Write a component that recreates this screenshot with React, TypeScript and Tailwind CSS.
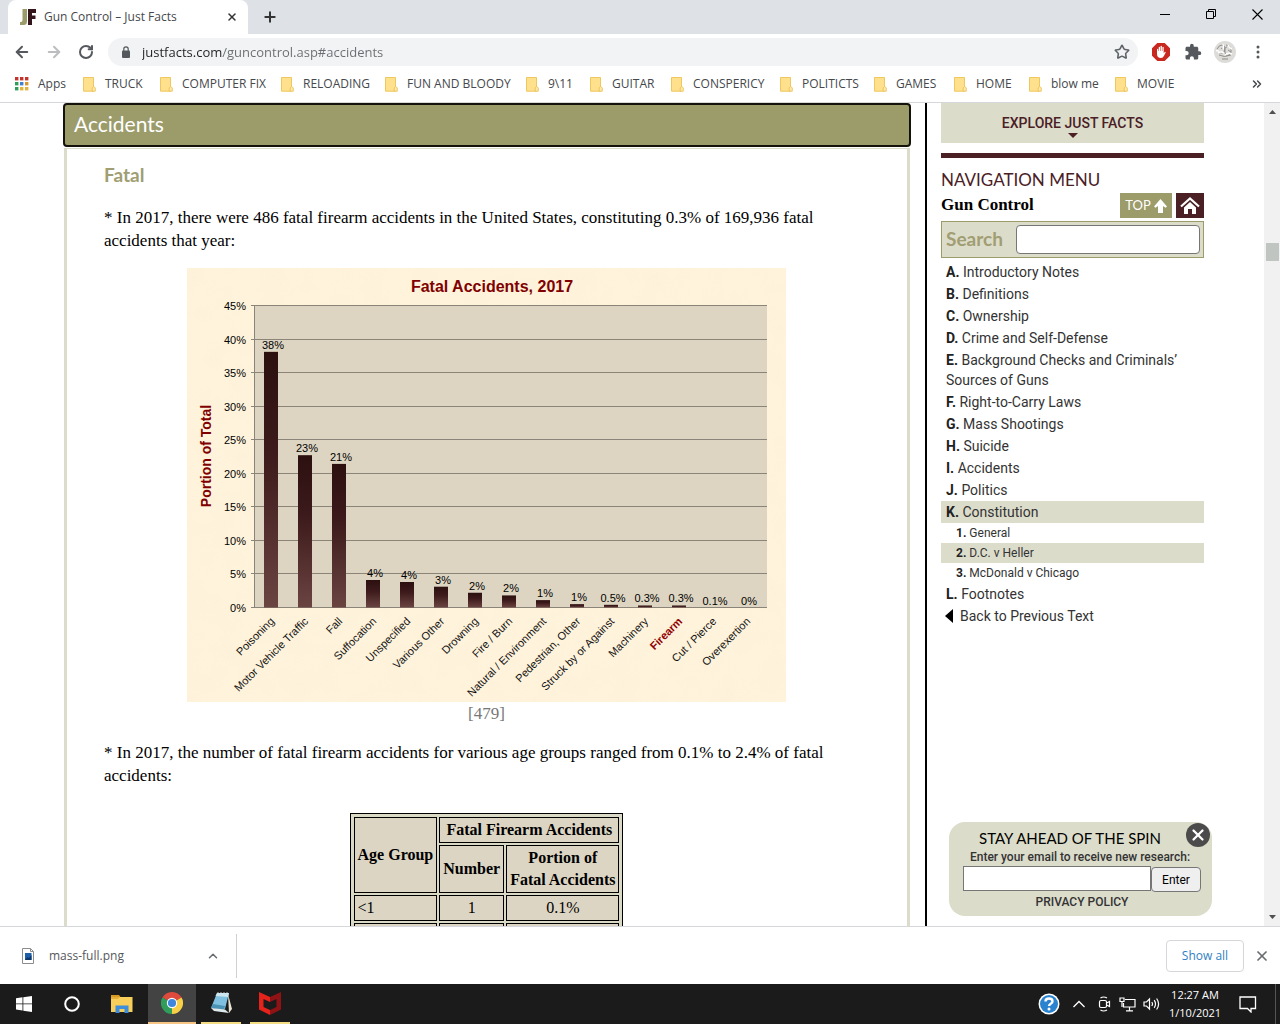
import {
  ArrowLeft,
  ArrowRight,
  ChevronUp,
  ChevronsRight,
  Plus,
  RotateCw,
  Star,
  X,
} from "lucide-react";
import { MdExtension } from "react-icons/md";

interface Bookmark {
  label: string;
  width: string;
}

interface NavItem {
  key: string;
  label: string;
  sub?: boolean;
  active?: boolean;
}

interface Cause {
  label: string;
  value: number;
  text: string;
}

const bookmarks: Bookmark[] = [
  { label: "TRUCK", width: "w-[77px]" },
  { label: "COMPUTER FIX", width: "w-[121px]" },
  { label: "RELOADING", width: "w-[104px]" },
  { label: "FUN AND BLOODY", width: "w-[141px]" },
  { label: "9\\11", width: "w-16" },
  { label: "GUITAR", width: "w-[81px]" },
  { label: "CONSPERICY", width: "w-[109px]" },
  { label: "POLITICTS", width: "w-[94px]" },
  { label: "GAMES", width: "w-20" },
  { label: "HOME", width: "w-[75px]" },
  { label: "blow me", width: "w-[86px]" },
  { label: "MOVIE", width: "w-20" },
];

const navItems: NavItem[] = [
  { key: "A.", label: "Introductory Notes" },
  { key: "B.", label: "Definitions" },
  { key: "C.", label: "Ownership" },
  { key: "D.", label: "Crime and Self-Defense" },
  { key: "E.", label: "Background Checks and Criminals’ Sources of Guns" },
  { key: "F.", label: "Right-to-Carry Laws" },
  { key: "G.", label: "Mass Shootings" },
  { key: "H.", label: "Suicide" },
  { key: "I.", label: "Accidents" },
  { key: "J.", label: "Politics" },
  { key: "K.", label: "Constitution", active: true },
  { key: "1.", label: "General", sub: true },
  { key: "2.", label: "D.C. v Heller", sub: true, active: true },
  { key: "3.", label: "McDonald v Chicago", sub: true },
  { key: "L.", label: "Footnotes" },
];

const causes: Cause[] = [
  { label: "Poisoning", value: 38.1, text: "38%" },
  { label: "Motor Vehicle Traffic", value: 22.7, text: "23%" },
  { label: "Fall", value: 21.4, text: "21%" },
  { label: "Suffocation", value: 4.1, text: "4%" },
  { label: "Unspecified", value: 3.8, text: "4%" },
  { label: "Various Other", value: 3.1, text: "3%" },
  { label: "Drowning", value: 2.2, text: "2%" },
  { label: "Fire / Burn", value: 1.8, text: "2%" },
  { label: "Natural / Environment", value: 1.1, text: "1%" },
  { label: "Pedestrian, Other", value: 0.5, text: "1%" },
  { label: "Struck by or Against", value: 0.4, text: "0.5%" },
  { label: "Machinery", value: 0.3, text: "0.3%" },
  { label: "Firearm", value: 0.3, text: "0.3%" },
  { label: "Cut / Pierce", value: 0, text: "0.1%" },
  { label: "Overexertion", value: 0, text: "0%" },
];

const ticks = [45, 40, 35, 30, 25, 20, 15, 10, 5, 0];

// chart plot area
const PLOT_LEFT = 67;
const PLOT_RIGHT = 580;
const PLOT_BOTTOM = 339.5;
const PER_PERCENT = 6.71;
const BAR_STEP = 34;

function FolderIcon() {
  return (
    <svg width="13" height="15" viewBox="0 0 13 15" className="shrink-0">
      <path d="M.5.5h10v13.7H.5z" fill="#ffe08c" stroke="#eec75e" />
      <path d="M10.5 9.5l1.8 1.3v3.4H9.2v-3.2z" fill="#ffe9ab" stroke="#e9bf50" strokeWidth=".8" />
    </svg>
  );
}

function AppsIcon() {
  const colors = ["#c5342c", "#c5342c", "#c5342c", "#2f9e5b", "#3f7fd6", "#d9962f", "#2f9e5b", "#e0b440", "#e0b440"];
  return (
    <svg width="14" height="14" viewBox="0 0 14 14">
      {colors.map((c, i) => (
        <rect key={i} x={(i % 3) * 5} y={Math.floor(i / 3) * 5} width="3.4" height="3.4" fill={c} />
      ))}
    </svg>
  );
}

function TabStrip() {
  return (
    <div className="flex h-[34px] shrink-0 bg-[#dee1e6]">
      <div className="ml-2 flex w-[240px] items-center rounded-t-lg bg-white pl-3 pr-2">
        <svg width="16" height="16" viewBox="0 0 16 16" className="shrink-0">
          <path d="M2 0h5v12.5Q7 16 3.5 16H0v-3h1q1.500 0 1.500-2V0z" fill="#9c9b6a" />
          <path d="M8 0h8v4h-4v2.500h3.500v3.500H12v6H8z" fill="#35151c" />
        </svg>
        <span className="ml-2 flex-1 whitespace-nowrap text-xs text-[#45484c]">Gun Control – Just Facts</span>
        <button aria-label="Close tab" className="flex h-4 w-4 items-center justify-center">
          <X className="h-3 w-3 text-[#333]" strokeWidth={3} />
        </button>
      </div>
      <button aria-label="New tab" className="flex w-11 items-center justify-center">
        <Plus className="h-4 w-4 text-[#333]" strokeWidth={3} />
      </button>
      <div className="ml-auto flex">
        <button aria-label="Minimize" className="flex w-[46px] items-center justify-center pb-1.5">
          <svg width="10" height="10" viewBox="0 0 10 10"><path d="M0 5.500h10" stroke="#000" /></svg>
        </button>
        <button aria-label="Restore" className="flex w-[46px] items-center justify-center pb-1.5">
          <svg width="10" height="10" viewBox="0 0 10 10" fill="none" stroke="#000">
            <path d="M.5 2.500h7v7h-7zM2.500 2.500v-2h7v7h-2" />
          </svg>
        </button>
        <button aria-label="Close" className="flex w-[46px] items-center justify-center pb-1.5">
          <svg width="11" height="11" viewBox="0 0 11 11"><path d="M.5.5l10 10M10.500.5l-10 10" stroke="#000" strokeWidth="1.1" /></svg>
        </button>
      </div>
    </div>
  );
}

function Toolbar() {
  return (
    <div className="flex h-9 shrink-0 items-center bg-white pr-3">
      <button aria-label="Back" className="ml-3 flex w-5 justify-center">
        <ArrowLeft className="h-[18px] w-[18px] text-[#55585c]" strokeWidth={2.6} />
      </button>
      <button aria-label="Forward" className="ml-3 flex w-5 justify-center">
        <ArrowRight className="h-[18px] w-[18px] text-[#bbbdbf]" strokeWidth={2.6} />
      </button>
      <button aria-label="Reload" className="ml-3 flex w-5 justify-center">
        <RotateCw className="h-4 w-4 text-[#55585c]" strokeWidth={3} />
      </button>
      <div className="ml-3 flex h-7 flex-1 items-center rounded-full bg-[#f1f3f4] pl-3.5 pr-2">
        <svg width="8" height="12" viewBox="0 0 8 12">
          <rect y="4.500" width="8" height="7.500" rx="1" fill="#55585c" />
          <path d="M1.800 5V3a2.200 2.200 0 0 1 4.400 0v2" fill="none" stroke="#55585c" strokeWidth="1.200" />
        </svg>
        {/* host is drawn darker than the path */}
        <input
          aria-label="Address"
          defaultValue="justfacts.com/guncontrol.asp#accidents"
          className="ml-3 min-w-0 flex-1 bg-[linear-gradient(90deg,#202124_80px,#6a6d70_80px)] bg-clip-text text-[13px] leading-7 text-transparent outline-none"
        />
        <button aria-label="Bookmark this page">
          <Star className="h-4 w-4 text-[#5f6368]" strokeWidth={2.4} />
        </button>
      </div>
      <button aria-label="Ad blocker" className="ml-3.5">
        <svg width="18" height="18" viewBox="0 0 18 18">
          <path d="M5.300 0h7.400L18 5.300v7.400L12.700 18H5.300L0 12.700V5.300z" fill="#c8281f" />
          <path d="M5 9V6.200q.6-.8 1.200 0V8h.5V4.200q.7-.9 1.300 0V8h.5V3.300q.8-.9 1.400 0V8h.5V4.200q.7-.9 1.300 0v6l1-1.200q.9-.4 1 .4l-1.800 3.600Q11 15 9 15q-4 0-4-4z" fill="#fff" />
        </svg>
      </button>
      <button aria-label="Extensions" className="ml-3.5">
        <MdExtension className="h-[18px] w-[18px] text-[#55585c]" />
      </button>
      <button aria-label="Profile" className="ml-3">
        <svg width="22" height="22" viewBox="0 0 22 22">
          <circle cx="11" cy="11" r="11" fill="#dddcd9" />
          <path d="M3 8q2-4 5-4t3 4-3 4-4-1M12 4q4 0 5 4t-2 6-4-3 2-5M5 14q5 3 12 0M8 18h6M14 9l3 2M7 7l3 2" fill="none" stroke="#8f8d89" />
          <path d="M4 12q3-2 6 0M11 14q3-3 7-1M9 3q1 3 0 6M2 10q2-1 3 1M14 4q1 3 4 4" fill="none" stroke="#fff" strokeWidth="1.400" />
        </svg>
      </button>
      <button aria-label="Menu" className="ml-3 flex w-5 justify-center">
        <svg width="4" height="14" viewBox="0 0 4 14" fill="#55585c">
          <circle cx="2" cy="2" r="1.500" />
          <circle cx="2" cy="7" r="1.500" />
          <circle cx="2" cy="12" r="1.500" />
        </svg>
      </button>
    </div>
  );
}

function BookmarksBar() {
  return (
    <nav className="flex h-[33px] shrink-0 items-center overflow-hidden border-b border-[#d5d7da] bg-white pb-1 pl-[15px] pr-4 text-xs text-[#45484c]">
      <a href="#apps" className="flex w-[68px] shrink-0 items-center gap-[9px]">
        <AppsIcon />
        Apps
      </a>
      {bookmarks.map((b) => (
        <a key={b.label} href="#bookmark" className={`flex shrink-0 items-center gap-[9px] whitespace-nowrap ${b.width}`}>
          <FolderIcon />
          {b.label}
        </a>
      ))}
      <button aria-label="More bookmarks" className="ml-auto">
        <ChevronsRight className="h-3.5 w-3.5 text-[#45484c]" strokeWidth={2.6} />
      </button>
    </nav>
  );
}

function AccidentsChart() {
  return (
    <svg
      width="599"
      height="434"
      viewBox="0 0 599 434"
      role="img"
      aria-label="Fatal Accidents, 2017"
      className="font-['Liberation_Sans',sans-serif]"
    >
      <defs>
        <linearGradient id="bar" x1="0" y1="0" x2="0" y2="1">
          <stop offset="0" stopColor="#2c1010" />
          <stop offset="0.4" stopColor="#3d1a1b" />
          <stop offset="1" stopColor="#6a4441" />
        </linearGradient>
        <filter id="paper" x="0" y="0" width="100%" height="100%">
          <feTurbulence type="fractalNoise" baseFrequency="0.04" numOctaves="2" seed="4" />
          <feColorMatrix values="0 0 0 0 0.96  0 0 0 0 0.86  0 0 0 0 0.68  2 0 0 0 -0.75" />
        </filter>
      </defs>
      <rect width="599" height="434" fill="#fff3dc" />
      <rect width="599" height="434" filter="url(#paper)" opacity="0.4" />
      <rect x={PLOT_LEFT} y="37.5" width={PLOT_RIGHT - PLOT_LEFT} height="302" fill="#ddd5c2" />
      {ticks.map((t) => {
        const y = Math.floor(PLOT_BOTTOM - t * PER_PERCENT) + 0.5;
        return (
          <g key={t}>
            <path d={`M${PLOT_LEFT - 3} ${y}H${PLOT_RIGHT}`} stroke="#8b8478" />
            <text x="59" y={y + 4} fontSize="11" textAnchor="end">{t}%</text>
          </g>
        );
      })}
      <path d={`M${PLOT_LEFT + 0.5} 37V340`} stroke="#8b8478" />
      {causes.map((c, i) => {
        const cx = PLOT_LEFT + 17 + i * BAR_STEP;
        const top = PLOT_BOTTOM - c.value * PER_PERCENT;
        const firearm = c.label === "Firearm";
        return (
          <g key={c.label} fontSize="11">
            <rect x={cx - 7} y={top} width="14" height={PLOT_BOTTOM - top} fill="url(#bar)" />
            <text x={cx + 2} y={top - 3} textAnchor="middle">{c.text}</text>
            <text
              transform={`translate(${cx + 4} 354) rotate(-45)`}
              textAnchor="end"
              fill={firearm ? "#900000" : "#111"}
              fontWeight={firearm ? 700 : 400}
            >
              {c.label}
            </text>
          </g>
        );
      })}
      <text x="305" y="24" fontSize="16" fontWeight="700" fill="#800000" textAnchor="middle">
        Fatal Accidents, 2017
      </text>
      <text transform="translate(24 188) rotate(-90)" fontSize="14" fontWeight="700" fill="#800000" textAnchor="middle">
        Portion of Total
      </text>
    </svg>
  );
}

function AgeTable() {
  const cell = "border border-black bg-[#ddd5c3] px-[3px] py-px";
  return (
    <table className="mx-auto mt-[26px] border-separate border-spacing-[2px] border border-black bg-[#d9d9c5] p-px text-base leading-[22px]">
      <thead>
        <tr>
          <th rowSpan={2} className={cell}>Age Group</th>
          <th colSpan={2} className={cell}>Fatal Firearm Accidents</th>
        </tr>
        <tr>
          <th className={cell}>Number</th>
          <th className={cell}>Portion of<br />Fatal Accidents</th>
        </tr>
      </thead>
      <tbody>
        <tr>
          <td className={cell}>&lt;1</td>
          <td className={`text-center ${cell}`}>1</td>
          <td className={`text-center ${cell}`}>0.1%</td>
        </tr>
        <tr className="h-7">
          <td className={cell}></td>
          <td className={cell}></td>
          <td className={cell}></td>
        </tr>
      </tbody>
    </table>
  );
}

function Article() {
  return (
    <main className="min-w-0 flex-1 pl-[63px] pr-3.5">
      <h1 className="h-11 rounded border-2 border-[#14120a] bg-[#9c9b6a] pl-[9px] font-['Lato',sans-serif] text-[21px] leading-[38px] text-white">
        Accidents
      </h1>
      <div className="mx-px mt-px border-x-[3px] border-t border-[#dcdccb] pl-[37px] pr-[38px] pt-3 font-['Liberation_Serif',serif] text-[17px] leading-[23px] text-black">
        <h2 className="font-['Lato',sans-serif] text-[19px] font-bold leading-7 text-[#a09e72]">Fatal</h2>
        <p className="mt-[17px] pr-10">
          * In 2017, there were 486 fatal firearm accidents in the United States, constituting 0.3% of 169,936 fatal
          accidents that year:
        </p>
        <div className="mt-4 flex flex-col items-center">
          <AccidentsChart />
          <a href="#footnote" className="text-[#777]">[479]</a>
        </div>
        <p className="mt-4 pr-10">
          * In 2017, the number of fatal firearm accidents for various age groups ranged from 0.1% to 2.4% of fatal
          accidents:
        </p>
        <AgeTable />
      </div>
    </main>
  );
}

function Sidebar() {
  return (
    <aside className="w-[339px] shrink-0 border-l-2 border-black pl-3.5 pr-[60px] font-['Roboto',sans-serif] text-[#333]">
      <button className="flex h-10 w-full flex-col items-center bg-[#dcdccb] pt-2.5 text-sm font-medium leading-5 text-[#4a2025]">
        EXPLORE JUST FACTS
        <svg width="10" height="5" viewBox="0 0 10 5"><path d="M0 0h10L5 5z" fill="#4a2025" /></svg>
      </button>
      <div className="mt-2.5 h-[5px] bg-[#4a2025]"></div>
      <h2 className="mt-2.5 font-['Lato',sans-serif] text-[17px] leading-6 text-[#4a2025]">NAVIGATION MENU</h2>
      <div className="flex h-[26px] items-center">
        <strong className="flex-1 font-['Liberation_Serif',serif] text-[17px] leading-6 text-black">Gun Control</strong>
        <a href="#top" className="mt-px flex h-[25px] w-[52px] items-center justify-center gap-[3px] bg-[#9c9b6a] font-['Lato',sans-serif] text-[13px] text-white">
          TOP
          <svg width="13" height="14" viewBox="0 0 13 14"><path d="M6.500 0l6.500 7.500-1.500 1.200L9 7v7H4V7L1.500 8.700 0 7.500z" fill="#fff" /></svg>
        </a>
        <a href="#home" aria-label="Home" className="ml-1 mt-px flex h-[25px] w-7 items-center justify-center bg-[#4a2025]">
          <svg width="20" height="18" viewBox="0 0 20 18">
            <path d="M1 9.500L10 1.500l9 8" fill="none" stroke="#fff" strokeWidth="2.200" />
            <path d="M10 5l6 5.400V17h-4v-5H8v5H4v-6.600z" fill="#fff" />
          </svg>
        </a>
      </div>
      <div className="mt-[3px] flex h-[37px] items-center border border-[#9c9b6a] bg-[#dcdccb] pl-1 pr-[3px]">
        <label htmlFor="search" className="w-[70px] font-['Lato',sans-serif] text-[19px] font-bold text-[#a09e72]">Search</label>
        <input id="search" className="h-[29px] min-w-0 flex-1 rounded-sm border border-[#767676] bg-white px-1" />
      </div>
      <ul className="mt-[3px]">
        {navItems.map((item) => (
          <li
            key={item.key}
            className={`${item.sub ? "pl-[15px] text-xs leading-5" : "py-px pl-[5px] text-sm leading-5"} ${
              item.active ? "bg-[#dcdccb]" : ""
            }`}
          >
            <a href="#section">
              <b className="font-bold text-[#222]">{item.key}</b> {item.label}
            </a>
          </li>
        ))}
      </ul>
      <a href="#back" className="flex items-center gap-[7px] pl-1 text-sm leading-[22px]">
        <svg width="8" height="14" viewBox="0 0 8 14"><path d="M8 0v14L0 7z" fill="#000" /></svg>
        Back to Previous Text
      </a>
    </aside>
  );
}

function Newsletter() {
  return (
    <form className="absolute bottom-2.5 right-[68px] w-[263px] rounded-2xl bg-[#dcdccb] pb-1 pl-3.5 pr-[11px] pt-1.5 text-center font-['Roboto',sans-serif] text-xs font-medium text-[#333]">
      <button type="button" aria-label="Dismiss" className="absolute right-0.5 top-px flex h-6 w-6 items-center justify-center rounded-full bg-[#4b4b4b]">
        <X className="h-[18px] w-[18px] text-white" strokeWidth={3} />
      </button>
      <h3 className="pr-6 font-['Lato',sans-serif] text-[15px] font-normal leading-5 text-black">STAY AHEAD OF THE SPIN</h3>
      <label htmlFor="email" className="block pr-1 leading-[18px]">Enter your email to receive new research:</label>
      <div className="flex items-start">
        <input id="email" type="email" className="h-[25px] min-w-0 flex-1 border border-[#767676] bg-white px-1" />
        <button type="button" className="mt-px h-[25px] w-[50px] rounded-sm border border-[#767676] bg-[#efefef] font-normal text-black">
          Enter
        </button>
      </div>
      <a href="#privacy" className="block leading-5">PRIVACY POLICY</a>
    </form>
  );
}

function Scrollbar() {
  return (
    <div className="flex w-4 shrink-0 flex-col items-center bg-[#f1f1f1] py-[7px]">
      <svg width="7" height="4" viewBox="0 0 7 4"><path d="M0 4h7L3.500 0z" fill="#505050" /></svg>
      <div className="mt-[129px] h-[18px] w-[13px] bg-[#c1c5c1]"></div>
      <svg width="7" height="4" viewBox="0 0 7 4" className="mt-auto"><path d="M0 0h7L3.500 4z" fill="#505050" /></svg>
    </div>
  );
}

function DownloadBar() {
  return (
    <div className="flex h-[58px] shrink-0 items-center border-t border-[#d5d7da] bg-white pl-[22px] pr-2.5 text-[#55585c]">
      <svg width="12" height="16" viewBox="0 0 12 16">
        <path d="M.5.5h8l3 3v12H.5z" fill="#fff" stroke="#8a8d90" />
        <path d="M8.500.5v3h3" fill="none" stroke="#8a8d90" />
        <path d="M3 5h6.500v7H3z" fill="#1d5fa8" />
        <path d="M3 12l2.500-3 1.500 1.200L9.500 7v5z" fill="#0b3768" />
      </svg>
      <span className="ml-[15px] w-[157px] text-xs">mass-full.png</span>
      <button aria-label="Download options">
        <ChevronUp className="h-3.5 w-3.5 text-[#6a6d70]" strokeWidth={2.6} />
      </button>
      <div className="ml-4 h-11 w-px bg-[#cfd1d3]"></div>
      <button className="ml-auto h-8 w-[78px] rounded border border-[#d5d7da] text-xs text-[#2f7fc4]">Show all</button>
      <button aria-label="Close downloads" className="ml-2.5">
        <X className="h-4 w-4 text-[#6a6d70]" strokeWidth={2.6} />
      </button>
    </div>
  );
}

function Taskbar() {
  return (
    <footer className="flex h-10 shrink-0 items-stretch bg-[#1b1b1b] text-white">
      <button aria-label="Start" className="flex w-12 items-center justify-center">
        <svg width="16" height="16" viewBox="0 0 16 16" fill="#fff">
          <path d="M0 2.200l6.500-.9v6.200H0zM7.300 1.200L16 0v7.500H7.300zM0 8.300h6.500v6.200L0 13.600zM7.300 8.300H16V16l-8.700-1.200z" />
        </svg>
      </button>
      <button aria-label="Cortana" className="flex w-12 items-center justify-center">
        <svg width="16" height="16" viewBox="0 0 16 16"><circle cx="8" cy="8" r="6.800" fill="none" stroke="#fff" strokeWidth="2" /></svg>
      </button>
      <button aria-label="File Explorer" className="flex w-[52px] items-center justify-center">
        <svg width="22" height="18" viewBox="0 0 22 18">
          <path d="M0 0h8l1.500 2H0z" fill="#d99a22" />
          <path d="M0 2h21.500v15H0z" fill="#f8cf5b" />
          <path d="M0 2h9l-2 2H0z" fill="#e8ae3a" />
          <path d="M4.500 18v-7.500h13V18h-4v-4h-5v4z" fill="#3d8fdb" />
        </svg>
      </button>
      <button aria-label="Chrome" className="flex w-12 items-center justify-center border-b-2 border-[#f6c584] bg-[#434343]">
        <svg width="22" height="22" viewBox="0 0 22 22">
          <path d="M11 11L1.470 5.500A11 11 0 0 1 20.530 5.500z" fill="#de4a3c" />
          <path d="M11 11l9.530-5.500A11 11 0 0 1 11 22z" fill="#f8cf45" />
          <path d="M11 11v11A11 11 0 0 1 1.470 5.500z" fill="#2f9e5b" />
          <path d="M11 6h9.800l-.27-.5L11 5.500z" fill="#de4a3c" />
          <path d="M15.500 13.500L11 22l5-9z" fill="#f8cf45" />
          <circle cx="11" cy="11" r="5.200" fill="#fff" />
          <circle cx="11" cy="11" r="4.100" fill="#3f86dc" />
        </svg>
      </button>
      <button aria-label="Notepad" className="ml-[5px] flex w-10 items-center justify-center border-b-2 border-[#f3dc84]">
        <svg width="23" height="22" viewBox="0 0 23 22">
          <path d="M18 2l4 15-3 4z" fill="#e9e4d2" />
          <path d="M7 1h12l-4 16-14-1z" fill="#7fc0e0" />
          <path d="M7 1h12l-1 4-12.500-1z" fill="#cde5ee" />
          <path d="M3 12l12 2-1 4-13-2z" fill="#4b93b5" />
          <path d="M1 16l14 1.500L19 21l-15-2z" fill="#dfe8ea" />
          <path d="M8 1v-1M11 1v-1M14 1v-1M17 1v-1" stroke="#bbb" />
        </svg>
      </button>
      <button aria-label="McAfee" className="ml-[9px] flex w-10 items-center justify-center border-b-2 border-[#f3dc84]">
        <svg width="22" height="24" viewBox="0 0 22 24">
          <path d="M0 1l11 5v5L4.500 8v8L11 19v5L0 18.500z" fill="#e3231c" />
          <path d="M22 1L11 6v5l6.500-3v8L11 19v5l11-5.500z" fill="#8f1315" />
        </svg>
      </button>
      <div className="ml-auto flex items-center">
        <button aria-label="Help">
          <svg width="22" height="22" viewBox="0 0 22 22">
            <circle cx="11" cy="11" r="10.500" fill="#fff" />
            <circle cx="11" cy="11" r="9" fill="#2b83cf" />
            <path d="M7.500 8.500Q7.500 5.500 11 5.500t3.500 2.700q0 1.600-1.700 2.500T11 13" fill="none" stroke="#fff" strokeWidth="2.400" />
            <circle cx="11" cy="16" r="1.500" fill="#fff" />
          </svg>
        </button>
        <button aria-label="Show hidden icons" className="ml-3">
          <svg width="14" height="8" viewBox="0 0 14 8"><path d="M1.500 7L7 1.500 12.500 7" fill="none" stroke="#fff" strokeWidth="1.300" /></svg>
        </button>
        <button aria-label="Meet now" className="ml-3">
          <svg width="13" height="16" viewBox="0 0 13 16" fill="none" stroke="#fff" strokeWidth="1.200">
            <rect x="1.500" y="4.500" width="7" height="7" rx="1.500" />
            <path d="M8.500 7l3-1.500v5L8.500 9M2.500 2Q5.500 0 9 2M2.500 14q3 2 6.500 0" />
          </svg>
        </button>
        <button aria-label="Network" className="ml-2">
          <svg width="17" height="15" viewBox="0 0 17 15" fill="none" stroke="#fff" strokeWidth="1.200">
            <path d="M6 2.500h10v7.500H4.500V6M10.500 10v3.500M7 13.800h7" />
            <path d="M1 1h4v3.500H1zM3 4.500V10" />
          </svg>
        </button>
        <button aria-label="Volume" className="ml-[7px]">
          <svg width="17" height="14" viewBox="0 0 17 14" fill="none" stroke="#fff" strokeWidth="1.200">
            <path d="M1 5h2.500L6.500 2v10L3.500 9H1zM8.800 5q1.400 2 0 4M11.200 3.200q2.600 3.800 0 7.600M13.600 1.500q4 5.500 0 11" />
          </svg>
        </button>
        <div className="ml-[9px] w-[52px] whitespace-nowrap text-center text-[11px] leading-[18px]">
          <div>12:27 AM</div>
          <div>1/10/2021</div>
        </div>
        <button aria-label="Notifications" className="ml-[18px] mr-[18px]">
          <svg width="18" height="17" viewBox="0 0 18 17"><path d="M1 1h15.500v11.500h-4.500V16l-3.500-3.500H1z" fill="none" stroke="#fff" strokeWidth="1.300" /></svg>
        </button>
        <div className="h-10 w-px bg-[#555]"></div>
        <div className="w-1"></div>
      </div>
    </footer>
  );
}

export default function App() {
  return (
    <div className="flex h-screen flex-col overflow-hidden bg-white font-['Open_Sans',sans-serif]">
      <TabStrip />
      <Toolbar />
      <BookmarksBar />
      {/* Page viewport */}
      <div className="relative flex min-h-0 flex-1 overflow-hidden bg-white">
        <Article />
        <Sidebar />
        <Scrollbar />
        <Newsletter />
      </div>
      <DownloadBar />
      <Taskbar />
    </div>
  );
}
